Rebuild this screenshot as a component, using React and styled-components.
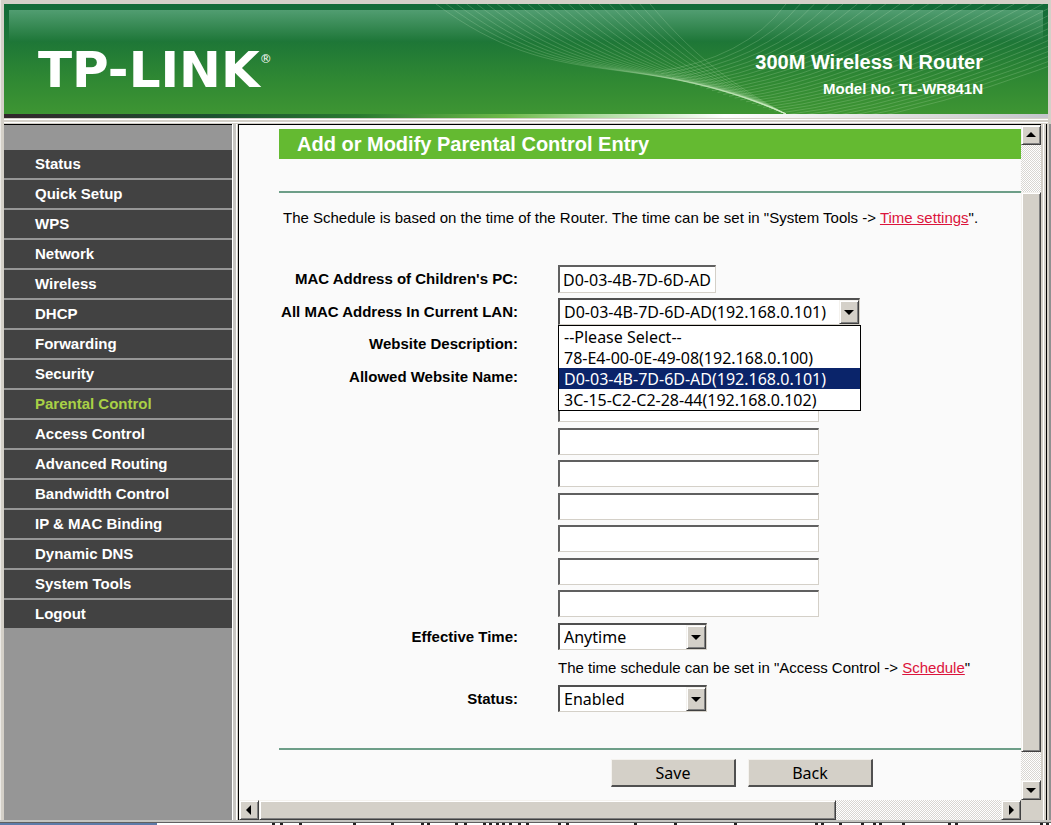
import React, { useState } from 'react';
import styled, { createGlobalStyle, css } from 'styled-components';

const MENU = [
  'Status', 'Quick Setup', 'WPS', 'Network', 'Wireless', 'DHCP', 'Forwarding', 'Security',
  'Parental Control', 'Access Control', 'Advanced Routing', 'Bandwidth Control',
  'IP & MAC Binding', 'Dynamic DNS', 'System Tools', 'Logout',
];

const LAN_HOSTS = [
  '--Please Select--',
  '78-E4-00-0E-49-08(192.168.0.100)',
  'D0-03-4B-7D-6D-AD(192.168.0.101)',
  '3C-15-C2-C2-28-44(192.168.0.102)',
];

const GlobalStyle = createGlobalStyle`
  * { box-sizing: border-box; }
  body {
    margin: 0;
    background: #d4d0c8;
    font-family: "Liberation Sans", Arial, sans-serif;
    color: #000;
  }
`;

const mix = (a, b, t) => a + (b - a) * t;

const Waves = () => (
  <WaveArt viewBox="0 0 648 110" aria-hidden="true">
    <g fill="none" stroke="#d0f0c8">
      {Array.from({ length: 22 }, (_, i) => {
        const t = i / 21;
        return (
          <path
            key={`left${i}`}
            strokeOpacity="0.2"
            d={`M${mix(36, 250, t)} 0 C${mix(160, 300, t)} ${mix(92, 60, t)} ${mix(230, 345, t)} ${mix(42, 88, t)} 386 110`}
          />
        );
      })}
      {Array.from({ length: 30 }, (_, i) => {
        const t = i / 29;
        return (
          <path
            key={`right${i}`}
            strokeOpacity="0.2"
            d={`M${mix(386, 800, t)} 0 Q${mix(345, 570, t)} ${mix(55, 104, t)} ${mix(255, 420, t)} ${mix(68, 122, t)}`}
          />
        );
      })}
    </g>
  </WaveArt>
);

const Arrow = ({ d }) => (
  <svg width="12" height="12" viewBox="0 0 12 12" aria-hidden="true">
    <path d={d} fill="#000" />
  </svg>
);

const UP = 'M6 3 L11 8 H1 Z';
const DOWN = 'M1 4 H11 L6 9 Z';
const LEFT = 'M8 1 V11 L3 6 Z';
const RIGHT = 'M4 1 V11 L9 6 Z';

// tops of the text line that is cut off under the frame
const SPECKS = [
  272, 280, 299, 353, 391, 421, 427, 455, 464, 483, 489, 496, 502, 509, 518, 526, 558, 566,
  634, 674, 734, 815, 821, 839, 861, 873, 879, 902, 948, 955, 1040, 1046,
];

const Specks = () => (
  <SpeckArt aria-hidden="true">
    {SPECKS.map((x) => <rect key={x} x={x} y="0" width="3" height="2" fill="#222" />)}
  </SpeckArt>
);

const Dropdown = ({ children, ...rest }) => (
  <SelectBox>
    <Select {...rest}>{children}</Select>
    <SelectArrow><Arrow d={DOWN} /></SelectArrow>
  </SelectBox>
);

const App = () => {
  const [host, setHost] = useState(LAN_HOSTS[2]);
  const [open, setOpen] = useState(true);

  const pick = (value) => {
    setHost(value);
    setOpen(false);
  };

  return (
    <Page>
      <GlobalStyle />
      <Header>
        <Gloss />
        <Waves />
        <Logo>TP-LINK<sup>®</sup></Logo>
        <Product>
          <ProductName>300M Wireless N Router</ProductName>
          <Model>Model No. TL-WR841N</Model>
        </Product>
      </Header>
      <HeaderLine />
      <Body>
        <Sidebar>
          {MENU.map((item) => (
            <MenuLink key={item} href="#" $active={item === 'Parental Control'}>{item}</MenuLink>
          ))}
        </Sidebar>
        <Divider />
        <Frame>
          <FrameRow>
            <Content>
              <Title>Add or Modify Parental Control Entry</Title>
              <Main>
                <Note>
                  The Schedule is based on the time of the Router. The time can be set in "System Tools -&gt; <RedLink href="#">Time settings</RedLink>".
                </Note>
                <Form>
                  <Label htmlFor="mac">MAC Address of Children's PC:</Label>
                  <TextInput id="mac" $short defaultValue="D0-03-4B-7D-6D-AD" />
                  <Label htmlFor="lan">All MAC Address In Current LAN:</Label>
                  <Combo>
                    <Dropdown id="lan" value={host} onChange={(e) => pick(e.target.value)}>
                      {LAN_HOSTS.map((h) => <option key={h}>{h}</option>)}
                    </Dropdown>
                    {open && (
                      <List>
                        {LAN_HOSTS.map((h) => (
                          <li key={h}>
                            <ListItem type="button" $selected={h === host} onClick={() => pick(h)}>{h}</ListItem>
                          </li>
                        ))}
                      </List>
                    )}
                  </Combo>
                  <Label htmlFor="desc">Website Description:</Label>
                  <TextInput id="desc" />
                  <Label htmlFor="site0">Allowed Website Name:</Label>
                  <Sites>
                    {Array.from({ length: 8 }, (_, i) => (
                      <TextInput key={i} id={`site${i}`} aria-label={`Allowed website ${i + 1}`} />
                    ))}
                  </Sites>
                  <Label htmlFor="time">Effective Time:</Label>
                  <Narrow>
                    <Dropdown id="time"><option>Anytime</option></Dropdown>
                  </Narrow>
                  <Hint>
                    The time schedule can be set in "Access Control -&gt; <RedLink href="#">Schedule</RedLink>"
                  </Hint>
                  <Label htmlFor="status">Status:</Label>
                  <Narrow>
                    <Dropdown id="status"><option>Enabled</option><option>Disabled</option></Dropdown>
                  </Narrow>
                </Form>
              </Main>
              <Actions>
                <Button type="button">Save</Button>
                <Button type="button">Back</Button>
              </Actions>
            </Content>
            <VTrack>
              <ScrollButton aria-label="Scroll up"><Arrow d={UP} /></ScrollButton>
              <VGap />
              <Thumb $grow={560} />
              <Spacer $grow={28} />
              <ScrollButton aria-label="Scroll down"><Arrow d={DOWN} /></ScrollButton>
            </VTrack>
          </FrameRow>
          <HRow>
            <HTrack>
              <ScrollButton aria-label="Scroll left"><Arrow d={LEFT} /></ScrollButton>
              <Thumb $grow={577} />
              <Spacer $grow={165} />
              <ScrollButton aria-label="Scroll right"><Arrow d={RIGHT} /></ScrollButton>
            </HTrack>
          </HRow>
        </Frame>
        <RightEdge />
      </Body>
      <BottomEdge><Specks /></BottomEdge>
    </Page>
  );
};

const raised = css`
  background: #d4d0c8;
  border: 1px solid;
  border-color: #f4f2ee #404040 #404040 #f4f2ee;
  box-shadow: inset 1px 1px 0 #fff, inset -1px -1px 0 #808080;
`;

const dither = css`
  background: repeating-conic-gradient(#fff 0 25%, #d8d6d2 0 50%) 0 0 / 2px 2px;
`;

const uiFont = css`
  font-family: "Noto Sans", Tahoma, sans-serif;
  font-size: 16px;
  color: #000;
`;

const Page = styled.div`
  min-height: 100vh;
  display: flex;
  flex-direction: column;
  padding: 4px 0 0 3px;
  border-left: 1px solid #eceae6;
`;

const Header = styled.header`
  position: relative;
  height: 110px;
  margin-right: 3px;
  display: flex;
  justify-content: space-between;
  align-items: flex-start;
  padding: 0 65px 0 34px;
  overflow: hidden;
  background: linear-gradient(#126a38 0, #1d7637 36px, #2f8833 75px, #3e9533 110px);
`;

const Gloss = styled.div`
  position: absolute;
  inset: 6px 5px auto 5px;
  height: 32px;
  background: linear-gradient(#519d71, #1d7637);
`;

const WaveArt = styled.svg`
  position: absolute;
  top: 0;
  right: 0;
  width: 648px;
  height: 110px;
`;

const Logo = styled.div`
  position: relative;
  display: flex;
  padding-top: 38px;
  color: #fff;
  font: bold 50px/56px "DejaVu Sans", sans-serif;
  sup {
    font-size: 12px;
    line-height: 34px;
    font-weight: normal;
  }
`;

const Product = styled.div`
  position: relative;
  padding-top: 46px;
  text-align: right;
  font-weight: bold;
  color: #fff;
`;

const ProductName = styled.div`
  font-size: 20px;
  line-height: 24px;
`;

const Model = styled.div`
  margin-top: 6px;
  font-size: 15px;
  line-height: 18px;
`;

const HeaderLine = styled.div`
  height: 10px;
  margin-right: 3px;
  background:
    linear-gradient(#fff, #fff) 0 5px / 100% 1px no-repeat,
    linear-gradient(#fff, #fff) 0 8px / 100% 1px no-repeat,
    linear-gradient(90deg, #33262c 0, #1c5130 20%, #2a7a30 34%, #6db848 48%, #a8d898 56%, #fff 69%, #d8d8d8 90%, #c4c4cc 100%) 0 0 / 100% 4px no-repeat,
    #d4d0c8;
`;

const Body = styled.div`
  flex: 1;
  display: flex;
`;

const Sidebar = styled.nav`
  width: 228px;
  padding-top: 25px;
  background: #969696;
  border-top: 1px solid #000;
`;

const MenuLink = styled.a`
  display: block;
  height: 30px;
  padding-left: 31px;
  background: #424242;
  border-bottom: 2px solid #969696;
  color: ${(p) => (p.$active ? '#a9d046' : '#fff')};
  font-size: 15px;
  font-weight: bold;
  line-height: 28px;
  text-decoration: none;
`;

const Divider = styled.div`
  width: 7px;
  background: linear-gradient(90deg, #fff 0 1px, #c8c6c2 1px 4px, #fff 4px 5px, #d4d0c8 5px 6px, #000 6px);
`;

const Frame = styled.div`
  flex: 1;
  min-width: 0;
  display: flex;
  flex-direction: column;
  border-top: 1px solid #000;
`;

const FrameRow = styled.div`
  flex: 1;
  display: flex;
`;

const Content = styled.main`
  flex: 1;
  min-width: 0;
  padding: 4px 0 0 40px;
  overflow: hidden;
  background: #fafafa;
`;

const Title = styled.h1`
  margin: 0;
  padding-left: 18px;
  background: #64ba31;
  color: #fff;
  font-size: 20px;
  line-height: 30px;
`;

const Main = styled.section`
  margin-top: 32px;
  padding: 16px 0 36px;
  border-top: 2px solid #6d9e88;
  border-bottom: 2px solid #6d9e88;
`;

const Note = styled.p`
  margin: 0;
  padding-left: 4px;
  font-size: 15px;
  line-height: 18px;
  white-space: nowrap;
`;

const Form = styled.form`
  margin-top: 38px;
  display: grid;
  grid-template-columns: 239px 1fr;
  column-gap: 40px;
  row-gap: 5px;
  align-items: start;
`;

const Label = styled.label`
  text-align: right;
  font-size: 15px;
  font-weight: bold;
  line-height: 27px;
`;

const TextInput = styled.input`
  display: block;
  width: ${(p) => (p.$short ? '158px' : '261px')};
  height: 28px;
  padding: 0 3px;
  background: #fff;
  border: solid;
  border-width: 2px 1px 1px 2px;
  border-color: #606060 #d4d0c8 #d4d0c8 #606060;
  ${uiFont}
`;

const Sites = styled.div`
  ${TextInput} {
    height: 27px;
    margin-bottom: 5px;
  }
  ${TextInput}:nth-child(even) {
    margin-bottom: 6px;
  }
  ${TextInput}:last-child {
    margin-bottom: 1px;
  }
`;

const Combo = styled.div`
  position: relative;
  width: 302px;
`;

const Narrow = styled.div`
  width: 149px;
`;

const SelectBox = styled.div`
  position: relative;
`;

const Select = styled.select`
  display: block;
  width: 100%;
  height: 27px;
  padding: 0 22px 0 4px;
  appearance: none;
  background: #fff;
  border: solid;
  border-width: 2px 1px 1px 2px;
  border-color: #505050 #d4d0c8 #d4d0c8 #505050;
  border-radius: 0;
  ${uiFont}
`;

const SelectArrow = styled.span`
  position: absolute;
  top: 2px;
  right: 1px;
  bottom: 1px;
  width: 20px;
  display: flex;
  align-items: center;
  justify-content: center;
  pointer-events: none;
  ${raised}
`;

const List = styled.ul`
  position: absolute;
  z-index: 1;
  top: 100%;
  left: 0;
  width: 303px;
  margin: 0;
  padding: 0;
  list-style: none;
  background: #fff;
  border: 1px solid #000;
`;

const ListItem = styled.button`
  display: block;
  width: 100%;
  height: 21px;
  padding: 1px 5px 0;
  border: 0;
  text-align: left;
  ${uiFont}
  line-height: 21px;
  background: ${(p) => (p.$selected ? '#0a246a' : '#fff')};
  color: ${(p) => (p.$selected ? '#fff' : '#000')};
`;

const Hint = styled.p`
  grid-column: 2;
  margin: 4px 0 3px;
  font-size: 15px;
  line-height: 18px;
  white-space: nowrap;
`;

const RedLink = styled.a`
  color: #dc143c;
`;

/* the form is wider than the frame, so the buttons centre on its full width */
const Actions = styled.div`
  width: 926px;
  display: flex;
  justify-content: center;
  gap: 12px;
  padding: 9px 0 11px;
`;

const Button = styled.button`
  width: 125px;
  height: 28px;
  padding: 0;
  ${uiFont}
  background: #d4d0c8;
  border: solid;
  border-width: 1px 2px 2px 1px;
  border-color: #f4f2ee #505050 #505050 #f4f2ee;
`;

const VTrack = styled.div`
  width: 20px;
  display: flex;
  flex-direction: column;
  ${dither}
`;

const HRow = styled.div`
  display: flex;
  padding-right: 20px;
  background: #d4d0c8;
`;

const HTrack = styled.div`
  flex: 1;
  height: 20px;
  display: flex;
  ${dither}
`;

const ScrollButton = styled.button`
  flex: none;
  width: 20px;
  height: 20px;
  padding: 0;
  display: flex;
  align-items: center;
  justify-content: center;
  ${raised}
`;

const VGap = styled.div`
  height: 47px;
`;

const Thumb = styled.div`
  flex: ${(p) => p.$grow} 0 0;
  ${raised}
`;

const Spacer = styled.div`
  flex: ${(p) => p.$grow} 0 0;
`;

const RightEdge = styled.div`
  width: 10px;
  background: linear-gradient(90deg, #d4d0c8 0 2px, #fff 2px 3px, #d4d0c8 3px 5px, #000 5px 6px, #d4d0c8 6px 8px, #909090 8px);
`;

const BottomEdge = styled.div`
  height: 5px;
  margin-left: -4px;
  padding-top: 3px;
  background:
    linear-gradient(90deg, #5d7ba8 157px, #fff 157px) 0 3px / 100% 2px no-repeat,
    linear-gradient(#c4c4c0 2px, #606060 2px);
`;

const SpeckArt = styled.svg`
  display: block;
  width: 100%;
  height: 2px;
`;

export default App;
